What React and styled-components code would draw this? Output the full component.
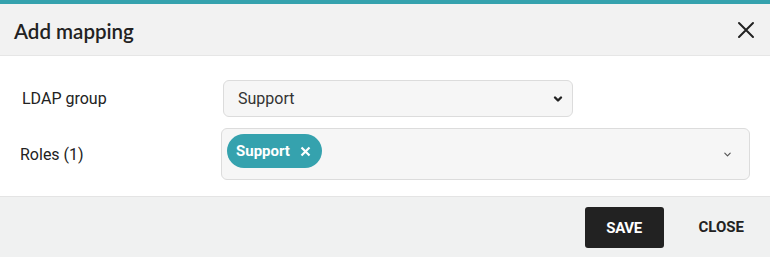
import styled, { createGlobalStyle } from "styled-components";

const GlobalStyle = createGlobalStyle`
  html, body {
    margin: 0;
    padding: 0;
    background: #fff;
  }
  body {
    font-family: Roboto, "Liberation Sans", sans-serif;
  }
`;

const Chevron = ({ size = 10, stroke = "#222", width = 2.4 }) => (
  <svg width={size} height={size} viewBox="0 0 10 10" fill="none">
    <path d="M2 3.5 L5 6.5 L8 3.5" stroke={stroke} strokeWidth={width} strokeLinecap="round" strokeLinejoin="round" />
  </svg>
);

const App = () => {
  return (
    <>
      <GlobalStyle />
      <Dialog>
        <Header>
          <Title>Add mapping</Title>
          <IconButton aria-label="close">
            <svg width="18" height="18" viewBox="0 0 18 18">
              <path d="M2 2 L16 16 M16 2 L2 16" stroke="#222" strokeWidth="2" strokeLinecap="round" />
            </svg>
          </IconButton>
        </Header>
        <Body>
          <Row>
            <Label $indent={2}>LDAP group</Label>
            <Select>
              <span>Support</span>
              <Chevron />
            </Select>
          </Row>
          <Row>
            <Label>Roles (1)</Label>
            <Multi>
              <Chip>
                Support
                <svg width="11" height="11" viewBox="0 0 11 11">
                  <path d="M1.5 1.5 L9.5 9.5 M9.5 1.5 L1.5 9.5" stroke="#fff" strokeWidth="2.2" />
                </svg>
              </Chip>
              <ChevronSlot>
                <Chevron size={9} stroke="#555" width={1.3} />
              </ChevronSlot>
            </Multi>
          </Row>
        </Body>
        <Footer>
          <SaveButton>Save</SaveButton>
          <TextButton>Close</TextButton>
        </Footer>
      </Dialog>
    </>
  );
};

export default App;

const Dialog = styled.div`
  width: 770px;
  height: 257px;
  border-top: 4px solid #35a2ae;
  box-sizing: border-box;
  display: flex;
  flex-direction: column;
  background: #fff;
`;

const Header = styled.div`
  height: 52px;
  display: flex;
  align-items: center;
  justify-content: space-between;
  padding: 0 15px 0 14px;
  background: #f2f2f2;
  border-bottom: 1px solid #e6e6e6;
  box-sizing: border-box;
`;

const Title = styled.h2`
  margin: 0;
  font-family: Lato, "Open Sans", sans-serif;
  font-weight: 600;
  font-size: 20.5px;
  color: #222;
  padding-top: 2px;
`;

const IconButton = styled.button`
  border: none;
  background: none;
  padding: 0;
  display: flex;
  cursor: pointer;
`;

const Body = styled.div`
  flex: 1;
  padding: 24px 20px 16px 20px;
  display: flex;
  flex-direction: column;
  gap: 11px;
`;

const Row = styled.div`
  display: grid;
  grid-template-columns: 201px 1fr;
  align-items: center;
`;

const Label = styled.label`
  font-size: 16px;
  color: #222;
  padding-left: ${(p) => p.$indent || 0}px;
`;

const Select = styled.div`
  width: 350px;
  height: 37px;
  margin-left: 2px;
  box-sizing: border-box;
  border: 1px solid #dcdcdc;
  border-radius: 6px;
  background: #f6f6f6;
  display: flex;
  align-items: center;
  justify-content: space-between;
  padding: 0 9px 0 14px;
  font-size: 16px;
  color: #333;
`;

const Multi = styled.div`
  height: 52px;
  box-sizing: border-box;
  border: 1px solid #dcdcdc;
  border-radius: 6px;
  background: #f6f6f6;
  display: flex;
  align-items: flex-start;
  justify-content: space-between;
  padding: 5px 17px 0 5px;
`;

const ChevronSlot = styled.span`
  display: flex;
  align-self: center;
  margin-top: -4px;
`;

const Chip = styled.span`
  height: 34px;
  box-sizing: border-box;
  padding: 0 11px 0 9px;
  border-radius: 17px;
  background: #35a2ae;
  color: #fff;
  font-weight: 700;
  font-size: 15px;
  display: inline-flex;
  align-items: center;
  gap: 10px;
`;

const Footer = styled.div`
  height: 61px;
  box-sizing: border-box;
  background: #f0f1f1;
  border-top: 1px solid #e4e4e4;
  display: flex;
  align-items: center;
  justify-content: flex-end;
  padding: 0 14px 0 0;
  gap: 23px;
`;

const SaveButton = styled.button`
  width: 79px;
  height: 41px;
  border: none;
  border-radius: 3px;
  background: #222;
  color: #fff;
  font-family: Roboto, "Liberation Sans", sans-serif;
  font-weight: 700;
  font-size: 15px;
  text-transform: uppercase;
  letter-spacing: -0.4px;
  cursor: pointer;
  margin-top: 1px;
`;

const TextButton = styled.button`
  height: 41px;
  padding: 0 12px;
  border: none;
  background: none;
  color: #222;
  font-family: Roboto, "Liberation Sans", sans-serif;
  font-weight: 700;
  font-size: 15px;
  text-transform: uppercase;
  letter-spacing: 0;
  cursor: pointer;
`;
